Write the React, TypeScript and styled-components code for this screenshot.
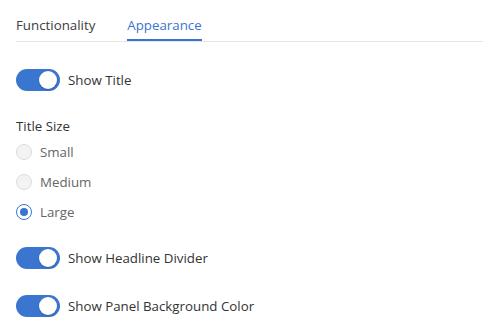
import React, { useState } from 'react'
import styled, { createGlobalStyle } from 'styled-components'

const GlobalStyle = createGlobalStyle`
  body {
    margin: 0;
    background: #ffffff;
    font-family: 'Open Sans', 'Noto Sans', sans-serif;
  }
`

const Panel = styled.div`
  width: 486px;
  height: 335px;
  box-sizing: border-box;
  padding: 0 3px 0 16px;
  background: #fff;
`

const TabBar = styled.div`
  display: flex;
  gap: 32px;
  height: 42px;
  border-bottom: 1px solid #e6e6e6;
  box-sizing: border-box;
`

const Tab = styled.div<{ $active?: boolean }>`
  display: flex;
  align-items: center;
  height: 100%;
  padding-top: 10px;
  box-sizing: border-box;
  font-size: 13.3px;
  color: ${(p) => (p.$active ? '#3b74cf' : '#404040')};
  border-bottom: 2px solid ${(p) => (p.$active ? '#3b74cf' : 'transparent')};
  margin-bottom: -1px;
`

const Body = styled.div`
  display: flex;
  flex-direction: column;
  padding-top: 26px;
`

const ToggleRow = styled.label<{ $gap?: number }>`
  display: flex;
  align-items: center;
  gap: 8px;
  height: 24px;
  font-size: 13.3px;
  color: #333;
  margin-bottom: ${(p) => p.$gap ?? 0}px;
`

const Track = styled.span<{ $on: boolean }>`
  position: relative;
  width: 44px;
  height: 22px;
  border-radius: 11px;
  background: ${(p) => (p.$on ? '#3a75d0' : '#d0d0d0')};
  flex-shrink: 0;
`

const Knob = styled.span<{ $on: boolean }>`
  position: absolute;
  top: 2px;
  left: ${(p) => (p.$on ? '23px' : '2px')};
  width: 18px;
  height: 18px;
  border-radius: 50%;
  background: #fff;
  box-shadow: 0 1px 2px rgba(0, 0, 0, 0.2);
`

const Group = styled.div`
  display: flex;
  flex-direction: column;
  margin-bottom: 19px;
`

const GroupLabel = styled.div`
  font-size: 13.3px;
  color: #333;
  height: 18px;
  line-height: 18px;
  margin-bottom: 2px;
`

const RadioRow = styled.label`
  display: flex;
  align-items: center;
  gap: 8px;
  height: 30px;
  font-size: 13.3px;
  color: #666;
`

const RadioDot = styled.span<{ $checked: boolean }>`
  width: 16px;
  height: 16px;
  box-sizing: border-box;
  border-radius: 50%;
  border: 1px solid ${(p) => (p.$checked ? '#3a75d0' : '#dcdcdc')};
  background: ${(p) => (p.$checked ? '#fff' : '#f3f3f3')};
  display: flex;
  align-items: center;
  justify-content: center;
  &::after {
    content: '';
    width: 8px;
    height: 8px;
    border-radius: 50%;
    background: ${(p) => (p.$checked ? '#3a75d0' : 'transparent')};
  }
`

const Toggle = ({ label, gap }: { label: string; gap?: number }) => {
  const [on, setOn] = useState(true)
  return (
    <ToggleRow $gap={gap} onClick={() => setOn(!on)}>
      <Track $on={on}>
        <Knob $on={on} />
      </Track>
      {label}
    </ToggleRow>
  )
}

const App = () => {
  const [size, setSize] = useState('Large')
  return (
    <Panel>
      <GlobalStyle />
      <TabBar>
        <Tab>Functionality</Tab>
        <Tab $active>Appearance</Tab>
      </TabBar>
      <Body>
        <Toggle label="Show Title" gap={25} />
        <Group>
          <GroupLabel>Title Size</GroupLabel>
          {['Small', 'Medium', 'Large'].map((s) => (
            <RadioRow key={s} onClick={() => setSize(s)}>
              <RadioDot $checked={size === s} />
              {s}
            </RadioRow>
          ))}
        </Group>
        <Toggle label="Show Headline Divider" gap={24} />
        <Toggle label="Show Panel Background Color" />
      </Body>
    </Panel>
  )
}

export default App
